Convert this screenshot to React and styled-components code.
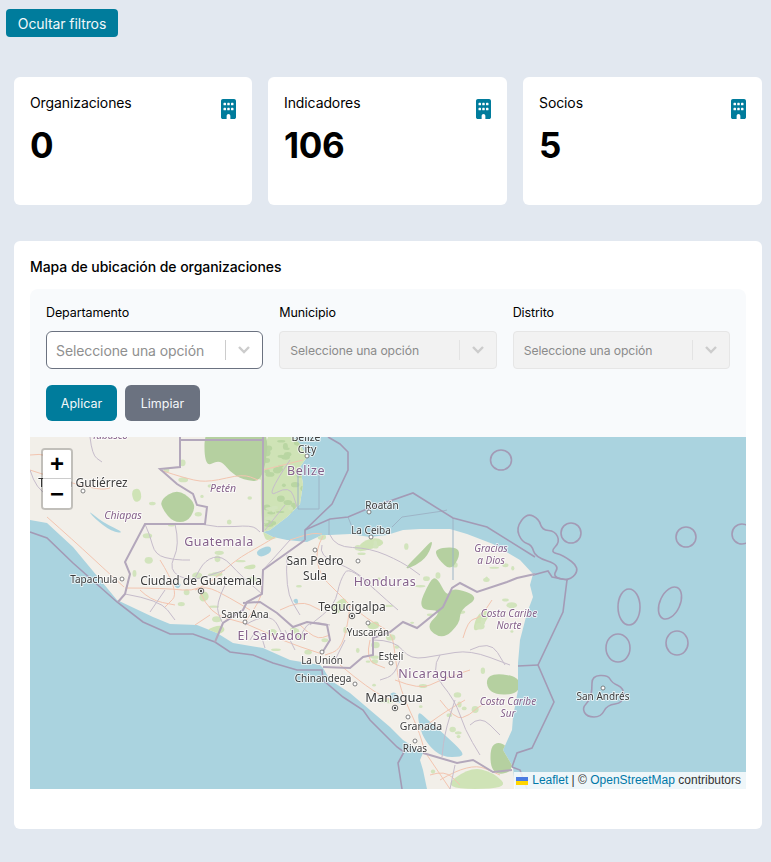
import React from "react";
import styled, { createGlobalStyle } from "styled-components";
import { FaBuilding } from "react-icons/fa6";

const GlobalStyle = createGlobalStyle`
  * { box-sizing: border-box; }
  body {
    margin: 0;
    background: #e2e8f0;
    font-family: Inter, "Noto Sans", sans-serif;
    color: #000;
  }
`;

const Page = styled.div`
  padding: 9px 9px 33px 6px;
`;

const Toggle = styled.button`
  display: block;
  width: 112px;
  height: 28px;
  padding: 0;
  border: none;
  border-radius: 4px;
  background: #007c9c;
  color: #f2f8fa;
  font: 400 14px Inter, sans-serif;
  letter-spacing: -0.1px;
`;

const Main = styled.main`
  margin: 40px 0 0 8px;
`;

const Stats = styled.section`
  display: grid;
  grid-template-columns: 238px 239px 239px;
  gap: 16px;
  margin-bottom: 36px;
`;

const StatCard = styled.article`
  position: relative;
  height: 128px;
  padding: 16px;
  background: #fff;
  border-radius: 6px;
`;

const StatTitle = styled.h3`
  margin: 1px 0 0;
  font-size: 14px;
  line-height: 17px;
  font-weight: 400;
  letter-spacing: -0.1px;
`;

const StatValue = styled.div`
  margin-top: 12px;
  font-size: 35px;
  line-height: 44px;
  font-weight: 700;
  letter-spacing: -0.4px;
`;

const StatIcon = styled(FaBuilding)`
  position: absolute;
  top: 22px;
  right: 16px;
  width: 15px;
  height: 20px;
  color: #007c9c;
`;

const MapCard = styled.section`
  padding: 16px 16px 40px;
  background: #fff;
  border-radius: 6px;
`;

const MapTitle = styled.h2`
  margin: 1px 0 14px;
  font-size: 14px;
  line-height: 17px;
  font-weight: 450;
  letter-spacing: -0.06px;
`;

const Filters = styled.div`
  padding: 16px;
  background: #f8fafc;
  border-radius: 8px 8px 0 0;
`;

const FieldGrid = styled.div`
  display: grid;
  grid-template-columns: repeat(3, 1fr);
  gap: 16px;
`;

const FieldLabel = styled.label`
  display: block;
  margin-bottom: 10px;
  font-size: 12.5px;
  line-height: 16px;
  letter-spacing: -0.1px;
`;

const Select = styled.div`
  display: flex;
  align-items: center;
  height: 38px;
  padding-left: ${(p) => (p.$disabled ? "10px" : "9px")};
  border: 1px solid ${(p) => (p.$disabled ? "#e6e6e6" : "#6b7280")};
  border-radius: ${(p) => (p.$disabled ? "4px" : "6px")};
  background: ${(p) => (p.$disabled ? "#f2f2f2" : "#fff")};
  color: ${(p) => (p.$disabled ? "#8b8b8b" : "#8f8f8f")};
  font-size: ${(p) => (p.$disabled ? "12.2px" : "14px")};
`;

const SelectText = styled.span`
  flex: 1;
  white-space: nowrap;
  letter-spacing: -0.1px;
`;

const SelectDivider = styled.span`
  width: 1px;
  height: 20px;
  background: ${(p) => (p.$disabled ? "#e3e3e3" : "#cccccc")};
`;

const Chevron = styled.svg`
  width: 36px;
  height: 20px;
  fill: none;
  stroke: #cccccc;
  stroke-width: 2.4;
`;

const Actions = styled.div`
  display: flex;
  gap: 8px;
  margin-top: 16px;
`;

const ActionButton = styled.button`
  width: ${(p) => p.$width}px;
  height: 36px;
  padding: 0;
  border: none;
  border-radius: 6px;
  background: ${(p) => p.$bg};
  color: #f4f8fa;
  font: 400 12.5px Inter, sans-serif;
`;

const MapFrame = styled.div`
  position: relative;
  height: 352px;
  overflow: hidden;
  background: #aad3df;
`;

const MapSvg = styled.svg`
  display: block;
  width: 100%;
  height: 100%;
`;

const MapLayer = styled.g`
  filter: blur(${(p) => p.$blur}px);
`;

const PlaceLabel = styled.text`
  font-family: "Noto Sans", "Open Sans", sans-serif;
  text-anchor: middle;
  paint-order: stroke;
  stroke: rgba(255, 255, 255, 0.7);
  stroke-width: 2px;
  stroke-linejoin: round;
  font-size: ${(p) => p.$size}px;
  fill: ${(p) => (p.$kind === "city" ? "#3c3c3c" : "#85618b")};
  font-style: ${(p) => (p.$kind === "region" ? "italic" : "normal")};
  letter-spacing: ${(p) => (p.$kind === "country" ? "0.6px" : "0")};
`;

const ZoomControl = styled.div`
  position: absolute;
  top: 11px;
  left: 11px;
  border: 2px solid rgba(0, 0, 0, 0.2);
  border-radius: 4px;
  background-clip: padding-box;
`;

const ZoomButton = styled.div`
  display: flex;
  align-items: center;
  justify-content: center;
  width: 28px;
  height: 29px;
  background: #fff;
  color: #000;
  font: 700 24px "Liberation Sans", sans-serif;
  border-bottom: ${(p) => (p.$first ? "1px solid #ccc" : "none")};
  border-radius: ${(p) => (p.$first ? "2px 2px 0 0" : "0 0 2px 2px")};
`;

const Attribution = styled.div`
  position: absolute;
  right: 0;
  bottom: 0;
  display: flex;
  align-items: center;
  height: 17px;
  padding: 0 5px 0 2px;
  background: rgba(255, 255, 255, 0.8);
  color: #333;
  font: 12px/17px "Liberation Sans", Arial, sans-serif;
  white-space: pre;
`;

const AttributionLink = styled.a`
  color: #0078a8;
`;

const Flag = styled.svg`
  width: 12px;
  height: 8px;
  margin-right: 4px;
`;

// turns a list of points written as "M x y L x y ..." into a rounded outline
const smooth = (d) => {
  const n = d.match(/-?[\d.]+/g).map(Number);
  const pts = [];
  for (let i = 0; i < n.length; i += 2) pts.push([n[i], n[i + 1]]);
  const mid = (a, b) => `${(a[0] + b[0]) / 2} ${(a[1] + b[1]) / 2}`;
  const closed = d.trim().endsWith("Z");
  if (closed) {
    let out = `M${mid(pts[pts.length - 1], pts[0])}`;
    pts.forEach((p, i) => {
      out += ` Q${p[0]} ${p[1]} ${mid(p, pts[(i + 1) % pts.length])}`;
    });
    return out + " Z";
  }
  let out = `M${pts[0][0]} ${pts[0][1]}`;
  for (let i = 1; i < pts.length - 1; i++) {
    out += ` Q${pts[i][0]} ${pts[i][1]} ${mid(pts[i], pts[i + 1])}`;
  }
  return out + ` L${pts[pts.length - 1][0]} ${pts[pts.length - 1][1]}`;
};

const LAND =
  "M30 437 L293 437 L300 444 L307 457 L300 467 L303 484 L300 504 L287 517 L270 530 L263 532 L273 537 L287 540 L307 542 L322 535 L330 535 L350 534 L370 537 L387 535 L403 530 L420 529 L450 529 L467 534 L493 544 L520 560 L533 574 L530 585 L533 597 L527 613 L520 640 L518 663 L518 690 L513 717 L512 730 L503 750 L513 767 L515 789 L427 789 L423 770 L420 760 L423 753 L403 740 L390 727 L370 710 L350 693 L330 680 L323 668 L320 665 L290 660 L263 648 L233 643 L217 633 L197 625 L170 624 L153 617 L117 600 L73 547 L47 523 L30 520";

const GREEN_DARK = [
  "M205 420 L270 420 L264 482 L243 480 L230 472 L220 459 L204 468 Z",
  "M160 500 L177 489 L193 500 L195 510 L187 522 L173 522 L163 510 Z",
  "M417 610 L430 580 L437 577 L447 597 L453 587 L480 597 L460 610 L460 623 L443 640 L425 627 L443 610 Z",
  "M435 548 L463 547 L452 572 L437 558 Z",
  "M486 673 L520 676 L519 695 L488 694 Z",
  "M490 743 L507 743 L515 772 L491 775 Z",
  "M421 552 L434 538 L428 556 L415 566 L403 570 Z",
];

const GREEN_LIGHT = [
  "M262 420 L320 420 L325 480 L310 520 L275 540 L260 540 Z",
  "M478 612 L492 610 L482 628 L472 632 Z",
  "M362 541 L378 537 L386 544 L368 550 L356 552 Z",
  "M131 490 L140 488 L142 500 L134 503 Z",
  "M235 655 L250 651 L252 655 L238 658 Z",
  "M440 789 L470 767 L493 772 L510 789 Z",
  "M240 568 L256 563 L255 570 Z",
  "M205 630 L222 624 L226 632 L210 636 Z",
  "M198 596 L206 590 L210 598 L202 603 Z",
  "M366 625 L378 620 L380 628 L370 630 Z",
  "M330 608 L344 596 L348 604 L336 616 Z",
];

const LAKES = [
  "M417 710 L428 720 L445 735 L463 752 L462 757 L442 757 L428 745 L420 730 Z",
  "M390 693 L396 692 L402 702 L398 704 L390 698 Z",
  "M255 551 L270 545 L272 552 L260 558 Z",
  "M88 510 L102 522 L125 533 L112 532 L94 518 Z",
  "M172 583 L182 583 L178 590 Z",
  "M292 600 L298 598 L298 606 Z",
];

const ROADS = [
  "M47 517 L73 540 L113 577 L124 587",
  "M30 470 L60 480 L100 490 L110 488",
  "M160 470 L190 480 L210 482 L243 474 L258 480",
  "M125 588 L165 588 L200 592 L235 560 L262 545 L275 537",
  "M200 592 L210 615 L245 622 L280 640 L322 654",
  "M210 615 L195 625",
  "M160 560 L180 592 L165 607",
  "M245 622 L262 600 L262 578",
  "M323 536 L315 550 L320 575 L335 590 L350 605",
  "M290 540 L310 533 L322 534",
  "M350 605 L348 625 L340 650 L325 655",
  "M350 605 L368 620 L392 632 L395 655 L400 690 L418 728 L425 752",
  "M395 680 L420 690 L440 680 L470 670",
  "M340 665 L370 690 L395 702",
  "M425 752 L450 789",
  "M440 700 L455 720 L470 715 L480 705 L500 700",
  "M463 638 L468 620 L480 618 L492 600",
  "M263 470 L303 460",
  "M440 780 L470 762 L500 775",
  "M30 455 L50 452 L60 475",
  "M195 590 L205 585 L230 598 L250 610",
  "M140 590 L150 600 L175 605",
  "M300 625 L315 640 L330 635",
  "M370 640 L365 660 L385 668",
  "M280 610 L300 600 L320 610",
  "M420 730 L440 715 L465 700",
  "M430 775 L445 770 L460 785",
];

const ADMIN = [
  "M90 437 L92 455 L102 462",
  "M30 470 L36 490 L60 500",
  "M145 524 L150 535 L155 555 L175 560 L190 560",
  "M175 524 L180 545 L168 570 L190 582 L225 570",
  "M200 524 L218 528 L252 525 L260 532",
  "M262 594 L240 575 L222 555 L205 560 L195 578",
  "M125 594 L160 600 L175 620",
  "M165 590 L150 612",
  "M225 585 L215 605 L222 622",
  "M263 570 L290 540",
  "M287 555 L285 590 L300 615",
  "M322 545 L318 556 L355 570 L375 590 L398 610",
  "M330 535 L335 547 L370 548 L402 562 L420 575",
  "M375 590 L350 565 L340 580 L335 605 L310 625",
  "M290 460 L263 500 L290 485 L297 507",
  "M265 530 L285 505",
  "M373 640 L395 640 L410 660 L440 655 L470 650 L510 665",
  "M440 655 L430 670 L455 700 L465 730 L480 755",
  "M400 660 L395 675 L380 680",
  "M455 700 L445 730 L442 757",
  "M470 650 L490 640 L505 665",
  "M470 725 L480 715 L500 735",
  "M245 625 L270 610 L285 640",
  "M300 640 L305 620 L330 625",
  "M450 789 L455 765",
  "M250 640 L258 625 L265 648",
  "M285 630 L295 650",
  "M345 640 L335 660",
];

const BORDERS = [
  "M180 437 L180 467 L160 469 L177 484 L193 494 L197 505 L207 507 L205 524 L145 524 L125 562 L130 574 L125 594 L118 602",
  "M263 437 L263 532",
  "M180 440 L263 440",
  "M305 540 L263 570 L262 594 L247 602 L243 610 L223 623 L215 642",
  "M243 603 L260 602 L277 613 L293 627 L307 622 L327 625 L330 640 L322 653",
  "M535 574 L517 578 L507 582 L477 592 L460 583 L452 588 L443 607 L417 628 L403 622 L390 632 L373 638 L373 655 L363 657 L350 668 L323 667",
  "M423 753 L457 763 L473 760 L493 772 L512 770",
];

const SEA_BORDERS = [
  "M30 532 L47 538 L73 563 L117 602 L143 622 L170 634 L193 634 L215 642 L230 652 L253 655 L273 663 L297 670 L322 670 L323 680 L343 697 L363 710 L370 720 L383 733 L397 747 L404 752 L398 763 L402 789",
  "M328 437 L340 444 L348 452 L348 470 L332 504 L305 530 L305 540",
  "M305 530 L330 519 L348 517 L367 509 L413 493 L453 518 L487 527 L535 557",
  "M533 575 L548 571 L552 577 L568 580",
  "M567 580 L563 612 L538 665 L554 702 L532 748 L517 753 L512 767",
  "M518 666 L538 665",
  "M512 767 L520 770 L527 789",
];

const SEA_LOOPS = [
  "M535 557 L532 545 L522 542 L516 528 L527 513 L539 519 L542 530 L555 531 L560 542 L550 552 L563 555 L580 568 L570 581 L552 577 L560 565 Z",
  "M592 690 L592 676 L608 675 L612 683 L624 688 L623 703 L607 705 L601 717 L587 717 L582 708 L590 700 Z",
];

const SEA_CIRCLES = [
  { cx: 571, cy: 533, rx: 10, ry: 10 },
  { cx: 686, cy: 537, rx: 10, ry: 10 },
  { cx: 742, cy: 534, rx: 10, ry: 10 },
  { cx: 501, cy: 460, rx: 10.5, ry: 10 },
  { cx: 629, cy: 607, rx: 11, ry: 18 },
  { cx: 618, cy: 648, rx: 12, ry: 14 },
  { cx: 677, cy: 643, rx: 11, ry: 12 },
];

const THIN_SEA = [
  "M298 470 L298 509 L319 509 L319 470",
  "M329 520 L329 535",
  "M348 517 L352 527",
  "M392 527 L402 517 L443 511 L447 510",
  "M453 518 L453 580",
];

const LABELS = [
  ["Tabasco", 110, 439, "region", 10],
  ["Belize", 306, 441, "city", 10.5],
  ["City", 307, 453, "city", 10.5],
  ["Belize", 306, 475, "country", 12.5],
  ["Tuxtla Gutiérrez", 83, 487, "city", 12],
  ["Petén", 223, 492, "region", 10.5],
  ["Chiapas", 123, 519, "region", 10.5],
  ["Roatán", 382, 509, "city", 10],
  ["La Ceiba", 371, 534, "city", 10],
  ["Guatemala", 219, 546, "country", 12.5],
  ["San Pedro", 315, 565, "city", 12],
  ["Sula", 315, 580, "city", 12],
  ["Honduras", 385, 586, "country", 12.5],
  ["Gracias", 491, 552, "region", 10],
  ["a Dios", 491, 564, "region", 10],
  ["Tapachula", 94, 583, "city", 10],
  ["Ciudad de Guatemala", 201, 585, "city", 12],
  ["Tegucigalpa", 352, 611, "city", 12],
  ["Costa Caribe", 509, 617, "region", 10],
  ["Norte", 509, 629, "region", 10],
  ["Santa Ana", 245, 618, "city", 10],
  ["Yuscarán", 368, 636, "city", 10],
  ["El Salvador", 273, 640, "country", 12.5],
  ["Estelí", 391, 660, "city", 10],
  ["La Unión", 322, 664, "city", 10],
  ["Nicaragua", 431, 678, "country", 12.5],
  ["Chinandega", 323, 682, "city", 10],
  ["Managua", 394, 702, "city", 13],
  ["San Andrés", 603, 700, "city", 10],
  ["Costa Caribe", 508, 705, "region", 10],
  ["Sur", 508, 717, "region", 10],
  ["Granada", 421, 730, "city", 10.5],
  ["Rivas", 415, 752, "city", 10],
];

const TOWNS = [
  [83, 491], [122, 579], [315, 550], [358, 561], [369, 512], [371, 537],
  [245, 622], [368, 623], [322, 652], [391, 663], [355, 684], [408, 717], [415, 741], [603, 688], [307, 456],
];

const CAPITALS = [[201, 591], [352, 616], [395, 708]];

// scattered vegetation patches, same on every render
const makePatches = () => {
  const out = [];
  let seed = 17;
  const next = () => {
    seed = (seed * 1103515245 + 12345) % 2147483648;
    return seed / 2147483648;
  };
  for (let i = 0; i < 170; i++) {
    const belize = i < 40;
    out.push({
      cx: belize ? 265 + next() * 40 : 130 + next() * 390,
      cy: belize ? 440 + next() * 90 : 440 + next() * 340,
      rx: 1.5 + next() * (belize ? 3 : 4),
      ry: 1 + next() * 2.5,
      fill: belize ? "#b9d6a2" : "#d2e4bd",
    });
  }
  return out;
};

const patches = makePatches();

function OsmMap() {
  return (
    <MapSvg viewBox="30 437 716 352">
      <defs>
        <clipPath id="land-clip">
          <path d={LAND + " Z"} />
        </clipPath>
      </defs>
      <MapLayer $blur={0.45}>
        <path d={LAND + " Z"} fill="#f2efe9" />
        <g clipPath="url(#land-clip)">
          {GREEN_LIGHT.map((d) => <path key={d} d={smooth(d)} fill="#cfe3b6" />)}
          {patches.map((p, i) => <ellipse key={i} cx={p.cx} cy={p.cy} rx={p.rx} ry={p.ry} fill={p.fill} />)}
          {GREEN_DARK.map((d) => <path key={d} d={smooth(d)} fill="#b5d0a0" />)}
        </g>
        {LAKES.map((d) => <path key={d} d={smooth(d)} fill="#aad3df" />)}
        {ROADS.map((d) => <path key={d} d={smooth(d)} fill="none" stroke="#f3c5b0" strokeWidth="1" />)}
        {ADMIN.map((d) => <path key={d} d={smooth(d)} fill="none" stroke="#c6bccb" strokeWidth="1" />)}
        {THIN_SEA.map((d) => <path key={d} d={d} fill="none" stroke="#9db4c6" strokeWidth="1" />)}
        {SEA_BORDERS.map((d) => <path key={d} d={d} fill="none" stroke="#a39ab5" strokeWidth="1.6" />)}
        {SEA_LOOPS.map((d) => <path key={d} d={smooth(d)} fill="none" stroke="#a39ab5" strokeWidth="1.6" />)}
        {SEA_CIRCLES.map((c) => <ellipse key={c.cx} {...c} fill="none" stroke="#a39ab5" strokeWidth="1.6" />)}
        <ellipse cx="670" cy="603" rx="10" ry="17" transform="rotate(25 670 603)" fill="none" stroke="#a39ab5" strokeWidth="1.6" />
        {BORDERS.map((d) => <path key={d} d={d} fill="none" stroke="#b3a7bb" strokeWidth="2" />)}
      </MapLayer>
      <MapLayer $blur={0.2}>
        {TOWNS.map(([x, y]) => <circle key={`${x}-${y}`} cx={x} cy={y} r="2" fill="#fff" stroke="#666" strokeWidth="0.8" />)}
        {CAPITALS.map(([x, y]) => (
          <g key={x}>
            <circle cx={x} cy={y} r="2.8" fill="#fff" stroke="#444" strokeWidth="0.8" />
            <circle cx={x} cy={y} r="1.2" fill="#444" />
          </g>
        ))}
        {LABELS.map(([text, x, y, kind, size]) => (
          <PlaceLabel key={`${text}-${y}`} x={x} y={y} $kind={kind} $size={size}>{text}</PlaceLabel>
        ))}
      </MapLayer>
    </MapSvg>
  );
}

const stats = [
  { title: "Organizaciones", value: "0" },
  { title: "Indicadores", value: "106" },
  { title: "Socios", value: "5" },
];

const fields = [
  { label: "Departamento", disabled: false },
  { label: "Municipio", disabled: true },
  { label: "Distrito", disabled: true },
];

export default function App() {
  return (
    <>
      <GlobalStyle />
      <Page>
        <Toggle>Ocultar filtros</Toggle>
        <Main>
          <Stats>
            {stats.map((s) => (
              <StatCard key={s.title}>
                <StatTitle>{s.title}</StatTitle>
                <StatValue>{s.value}</StatValue>
                <StatIcon />
              </StatCard>
            ))}
          </Stats>
          <MapCard>
            <MapTitle>Mapa de ubicación de organizaciones</MapTitle>
            <Filters>
              <FieldGrid>
                {fields.map((f) => (
                  <div key={f.label}>
                    <FieldLabel>{f.label}</FieldLabel>
                    <Select $disabled={f.disabled}>
                      <SelectText>Seleccione una opción</SelectText>
                      <SelectDivider $disabled={f.disabled} />
                      <Chevron viewBox="0 0 36 20">
                        <path d="M13 7 L18 12 L23 7" />
                      </Chevron>
                    </Select>
                  </div>
                ))}
              </FieldGrid>
              <Actions>
                <ActionButton $width={71} $bg="#007c9c">Aplicar</ActionButton>
                <ActionButton $width={75} $bg="#6b7280">Limpiar</ActionButton>
              </Actions>
            </Filters>
            <MapFrame>
              <OsmMap />
              <ZoomControl>
                <ZoomButton $first>+</ZoomButton>
                <ZoomButton>−</ZoomButton>
              </ZoomControl>
              <Attribution>
                <Flag viewBox="0 0 12 8">
                  <rect width="12" height="4" fill="#4C7BE1" />
                  <rect y="4" width="12" height="4" fill="#FFD500" />
                </Flag>
                <AttributionLink>Leaflet</AttributionLink>
                {" | © "}
                <AttributionLink>OpenStreetMap</AttributionLink>
                {" contributors"}
              </Attribution>
            </MapFrame>
          </MapCard>
        </Main>
      </Page>
    </>
  );
}
